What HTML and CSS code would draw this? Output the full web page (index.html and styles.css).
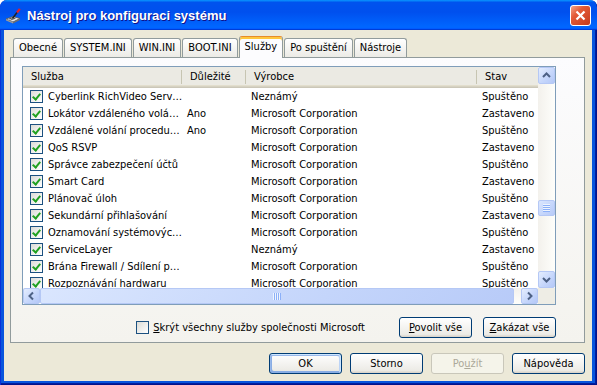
FILE: index.html
```html
<!DOCTYPE html>
<html lang="cs">
<head>
  <meta charset="utf-8" />
  <title>Nástroj pro konfiguraci systému</title>
  <link rel="stylesheet" href="styles.css">
</head>

<body>
  <div class="window">
    <!-- Titulek okna -->
    <header class="titlebar">
      <svg class="app-icon" width="16" height="16" viewBox="0 0 16 16">
        <path d="M1 11 L8 8.5 L15 10.5 L8 14 Z" fill="#e4e4e4" stroke="#555" stroke-width="0.8"/>
        <path d="M1 11 L1 12.5 L8 15.5 L8 14 Z" fill="#9a9a9a"/>
        <path d="M8 14 L8 15.5 L15 12 L15 10.5 Z" fill="#6e6e6e"/>
        <path d="M4 11 L9 9.4 M5.5 12 L10.5 10.2" stroke="#333" stroke-width="0.8"/>
        <path d="M7.5 10.5 L12 4.5" stroke="#222" stroke-width="1.6"/>
        <path d="M12 4.5 L14.8 0.8" stroke="#e0202a" stroke-width="2.2"/>
      </svg>
      <span class="title">Nástroj pro konfiguraci systému</span>
      <button class="close" aria-label="Zavřít">
        <svg width="11" height="11" viewBox="0 0 11 11"><path d="M1.5 1.5 L9.5 9.5 M9.5 1.5 L1.5 9.5" stroke="#fff" stroke-width="2.2"/></svg>
      </button>
    </header>

    <div class="client">
      <!-- Záložky -->
      <nav class="tabs">
        <a href="#" class="tab">Obecné</a>
        <a href="#" class="tab">SYSTEM.INI</a>
        <a href="#" class="tab">WIN.INI</a>
        <a href="#" class="tab">BOOT.INI</a>
        <a href="#" class="tab active">Služby</a>
        <a href="#" class="tab">Po spuštění</a>
        <a href="#" class="tab">Nástroje</a>
      </nav>

      <section class="panel">
        <div class="listview">
          <div class="list-main">
            <div class="cols list-head">
              <span>Služba</span>
              <span>Důležité</span>
              <span>Výrobce</span>
              <span>Stav</span>
            </div>
            <div class="cols row"><span class="name"><i class="box checked"></i>Cyberlink RichVideo Serv…</span><span></span><span>Neznámý</span><span>Spuštěno</span></div>
            <div class="cols row"><span class="name"><i class="box checked"></i>Lokátor vzdáleného volá…</span><span>Ano</span><span>Microsoft Corporation</span><span>Zastaveno</span></div>
            <div class="cols row"><span class="name"><i class="box checked"></i>Vzdálené volání procedu…</span><span>Ano</span><span>Microsoft Corporation</span><span>Spuštěno</span></div>
            <div class="cols row"><span class="name"><i class="box checked"></i>QoS RSVP</span><span></span><span>Microsoft Corporation</span><span>Zastaveno</span></div>
            <div class="cols row"><span class="name"><i class="box checked"></i>Správce zabezpečení účtů</span><span></span><span>Microsoft Corporation</span><span>Spuštěno</span></div>
            <div class="cols row"><span class="name"><i class="box checked"></i>Smart Card</span><span></span><span>Microsoft Corporation</span><span>Zastaveno</span></div>
            <div class="cols row"><span class="name"><i class="box checked"></i>Plánovač úloh</span><span></span><span>Microsoft Corporation</span><span>Spuštěno</span></div>
            <div class="cols row"><span class="name"><i class="box checked"></i>Sekundární přihlašování</span><span></span><span>Microsoft Corporation</span><span>Zastaveno</span></div>
            <div class="cols row"><span class="name"><i class="box checked"></i>Oznamování systémovýc…</span><span></span><span>Microsoft Corporation</span><span>Spuštěno</span></div>
            <div class="cols row"><span class="name"><i class="box checked"></i>ServiceLayer</span><span></span><span>Neznámý</span><span>Zastaveno</span></div>
            <div class="cols row"><span class="name"><i class="box checked"></i>Brána Firewall / Sdílení p…</span><span></span><span>Microsoft Corporation</span><span>Spuštěno</span></div>
            <div class="cols row"><span class="name"><i class="box checked"></i>Rozpoznávání hardwaru</span><span></span><span>Microsoft Corporation</span><span>Spuštěno</span></div>
          </div>

          <!-- svislý posuvník -->
          <div class="vscroll">
            <span class="sb-btn"><svg width="15" height="15" viewBox="0 0 15 15"><path d="M4 9 L7.5 5.5 L11 9" fill="none" stroke="#4d6185" stroke-width="2"/></svg></span>
            <div class="track">
              <span class="thumb v-thumb" style="margin-top: 116px"><i></i><i></i><i></i><i></i></span>
            </div>
            <span class="sb-btn"><svg width="15" height="15" viewBox="0 0 15 15"><path d="M4 6 L7.5 9.5 L11 6" fill="none" stroke="#4d6185" stroke-width="2"/></svg></span>
          </div>

          <!-- vodorovný posuvník -->
          <div class="hscroll">
            <span class="sb-btn"><svg width="15" height="14" viewBox="0 0 15 14"><path d="M9 3.5 L5.5 7 L9 10.5" fill="none" stroke="#4d6185" stroke-width="2"/></svg></span>
            <div class="track">
              <span class="thumb h-thumb" style="width: 474px"><i></i><i></i><i></i><i></i></span>
            </div>
            <span class="sb-btn"><svg width="15" height="14" viewBox="0 0 15 14"><path d="M6 3.5 L9.5 7 L6 10.5" fill="none" stroke="#4d6185" stroke-width="2"/></svg></span>
          </div>
          <div class="corner"></div>
        </div>

        <div class="panel-foot">
          <label class="hide-ms"><i class="box"></i><span><u>S</u>krýt všechny služby společnosti Microsoft</span></label>
          <button class="btn"><u>P</u>ovolit vše</button>
          <button class="btn"><u>Z</u>akázat vše</button>
        </div>
      </section>

      <footer class="dialog-buttons">
        <button class="btn default">OK</button>
        <button class="btn">Storno</button>
        <button class="btn" disabled>Po<u>u</u>žít</button>
        <button class="btn">Nápověda</button>
      </footer>
    </div>
  </div>
</body>
</html>
```

FILE: styles.css
```css
* {
  margin: 0;
  padding: 0;
  box-sizing: border-box;
}

body {
  background: #fff;
  font-family: "DejaVu Sans Condensed", "Liberation Sans", sans-serif;
  font-size: 11px;
  color: #000;
}

/* Okno */
.window {
  width: 597px;
  height: 385px;
  display: flex;
  flex-direction: column;
  background: #0855dd;
  border-radius: 7px 7px 0 0;
  box-shadow: inset 1px 0 #0831d9, inset -1px -1px #00138c, inset -2px -2px #001ea0;
  overflow: hidden;
}

.titlebar {
  height: 30px;
  flex: none;
  display: flex;
  align-items: center;
  padding: 0 6px 0 5px;
  background: linear-gradient(180deg, #0997ff, #0053ee 8%, #0050ee 40%, #06f 88%, #06f 93%, #005bff 95%, #003dd7 96%, #003dd7);
  border-radius: 7px 7px 0 0;
}
.titlebar .app-icon {
  flex: none;
  margin-top: 1px;
}
.titlebar .title {
  margin-left: 6px;
  color: #fff;
  font: bold 13px "Liberation Sans", sans-serif;
  text-shadow: 1px 1px #0f1089;
}
.titlebar .close {
  margin-left: auto;
  width: 21px;
  height: 21px;
  display: flex;
  align-items: center;
  justify-content: center;
  border: 1px solid #fff;
  border-radius: 3px;
  background: linear-gradient(135deg, #f4a58a, #e35a36 35%, #c63a1c);
}

.client {
  flex: 1;
  margin: 0 5px 4px 4px;
  padding: 6px 7px 0 6px;
  background: #ece9d8;
  display: flex;
  flex-direction: column;
}

/* Záložky */
.tabs {
  height: 21px;
  display: flex;
  align-items: flex-end;
  gap: 1px;
  padding-left: 3px;
}
.tab {
  height: 19px;
  padding: 0 5px;
  line-height: 18px;
  border: 1px solid #919b9c;
  border-bottom: none;
  border-radius: 3px 3px 0 0;
  background: linear-gradient(#fff, #ecebe6);
  color: #000;
  text-decoration: none;
}
.tab.active {
  height: 22px;
  margin-bottom: -1px;
  line-height: 16px;
  border-top: 1px solid #e68b2c;
  box-shadow: inset 0 2px #ffc73c;
  padding-top: 2px;
  background: #fcfcfe;
  position: relative;
  z-index: 1;
}

.panel {
  border: 1px solid #919b9c;
  background: linear-gradient(#fcfcfe, #f4f3ee);
  padding: 8px 28px 4px 11px;
}

/* Seznam služeb */
.listview {
  height: 239px;
  border: 1px solid #7f9db9;
  background: #fff;
  display: grid;
  grid-template-columns: 1fr 17px;
  grid-template-rows: 1fr 16px;
}
.list-main {
  overflow: hidden;
}
.cols {
  display: grid;
  grid-template-columns: 159px 64px 231px 120px;
  width: max-content;
}
.list-head {
  height: 21px;
  background: #ebeae3;
  box-shadow: inset 0 -1px #cbc7b8, inset 0 -2px #d6d2c2, inset 0 -3px #e2decd;
}
.list-head span {
  padding-left: 8px;
  line-height: 20px;
  background: linear-gradient(#c7c5b2, #c7c5b2) no-repeat right 0 top 3px / 1px 14px;
}
.row {
  height: 17px;
  align-items: center;
}
.row span {
  padding-left: 5px;
  white-space: nowrap;
  overflow: hidden;
}
.row .name {
  display: flex;
  align-items: center;
  gap: 5px;
  padding-left: 7px;
}

.box {
  flex: none;
  width: 13px;
  height: 13px;
  display: flex;
  align-items: center;
  justify-content: center;
  border: 1px solid #1c5180;
  background: linear-gradient(135deg, #dcdcd7, #fff);
}
.box.checked::after {
  content: "";
  width: 3px;
  height: 6px;
  margin-top: -2px;
  border: solid #21a121;
  border-width: 0 2px 2px 0;
  transform: rotate(40deg);
}

/* Posuvníky */
.vscroll {
  display: flex;
  flex-direction: column;
  background: linear-gradient(to right, #f3f1ec, #fefefb);
}
.vscroll .track {
  flex: 1;
}
.hscroll {
  display: flex;
  background: linear-gradient(#f3f1ec, #fefefb);
}
.hscroll .track {
  flex: 1;
}
.sb-btn {
  width: 17px;
  height: 17px;
  display: flex;
  align-items: center;
  justify-content: center;
  border: 1px solid #b5c8f5;
  border-radius: 2px;
  background: linear-gradient(135deg, #e4edfe, #c4d5fb 60%, #b4c8f7);
}
.hscroll .sb-btn {
  height: 16px;
}
.thumb {
  display: flex;
  align-items: center;
  justify-content: center;
  gap: 1px;
  border: 1px solid #b5c8f5;
  border-radius: 2px;
  background: linear-gradient(135deg, #dae6fe, #c4d5fb 60%, #b8cbf8);
}
.v-thumb {
  height: 16px;
  flex-direction: column;
}
.v-thumb i {
  width: 7px;
  height: 1px;
  background: #8cb0f8;
  box-shadow: 0 -1px #eef4fe;
}
.h-thumb {
  height: 16px;
}
.h-thumb i {
  width: 1px;
  height: 7px;
  background: #8cb0f8;
  box-shadow: -1px 0 #eef4fe;
}
.corner {
  background: #eeede5;
}

/* Spodní část panelu */
.panel-foot {
  margin-top: 12px;
  display: flex;
  align-items: center;
  justify-content: flex-end;
  gap: 11px;
}
.hide-ms {
  display: flex;
  align-items: center;
  gap: 4px;
  margin-right: 23px;
}

.btn {
  width: 73px;
  height: 21px;
  border: 1px solid #003c74;
  border-radius: 3px;
  background: linear-gradient(180deg, #fff, #ecebe6 86%, #d6d0c5);
  font: inherit;
  color: #000;
}
.btn.default {
  box-shadow: inset -1px 1px #cee7ff, inset 1px 2px #98b8ea, inset -2px 2px #bcd4f6, inset 1px -1px #89ade4, inset 2px -2px #89ade4;
}
.btn:disabled {
  border-color: #c9c7ba;
  background: #f5f4ea;
  color: #aca899;
}

.dialog-buttons {
  margin-top: 10px;
  display: flex;
  justify-content: flex-end;
  gap: 8px;
}
```
